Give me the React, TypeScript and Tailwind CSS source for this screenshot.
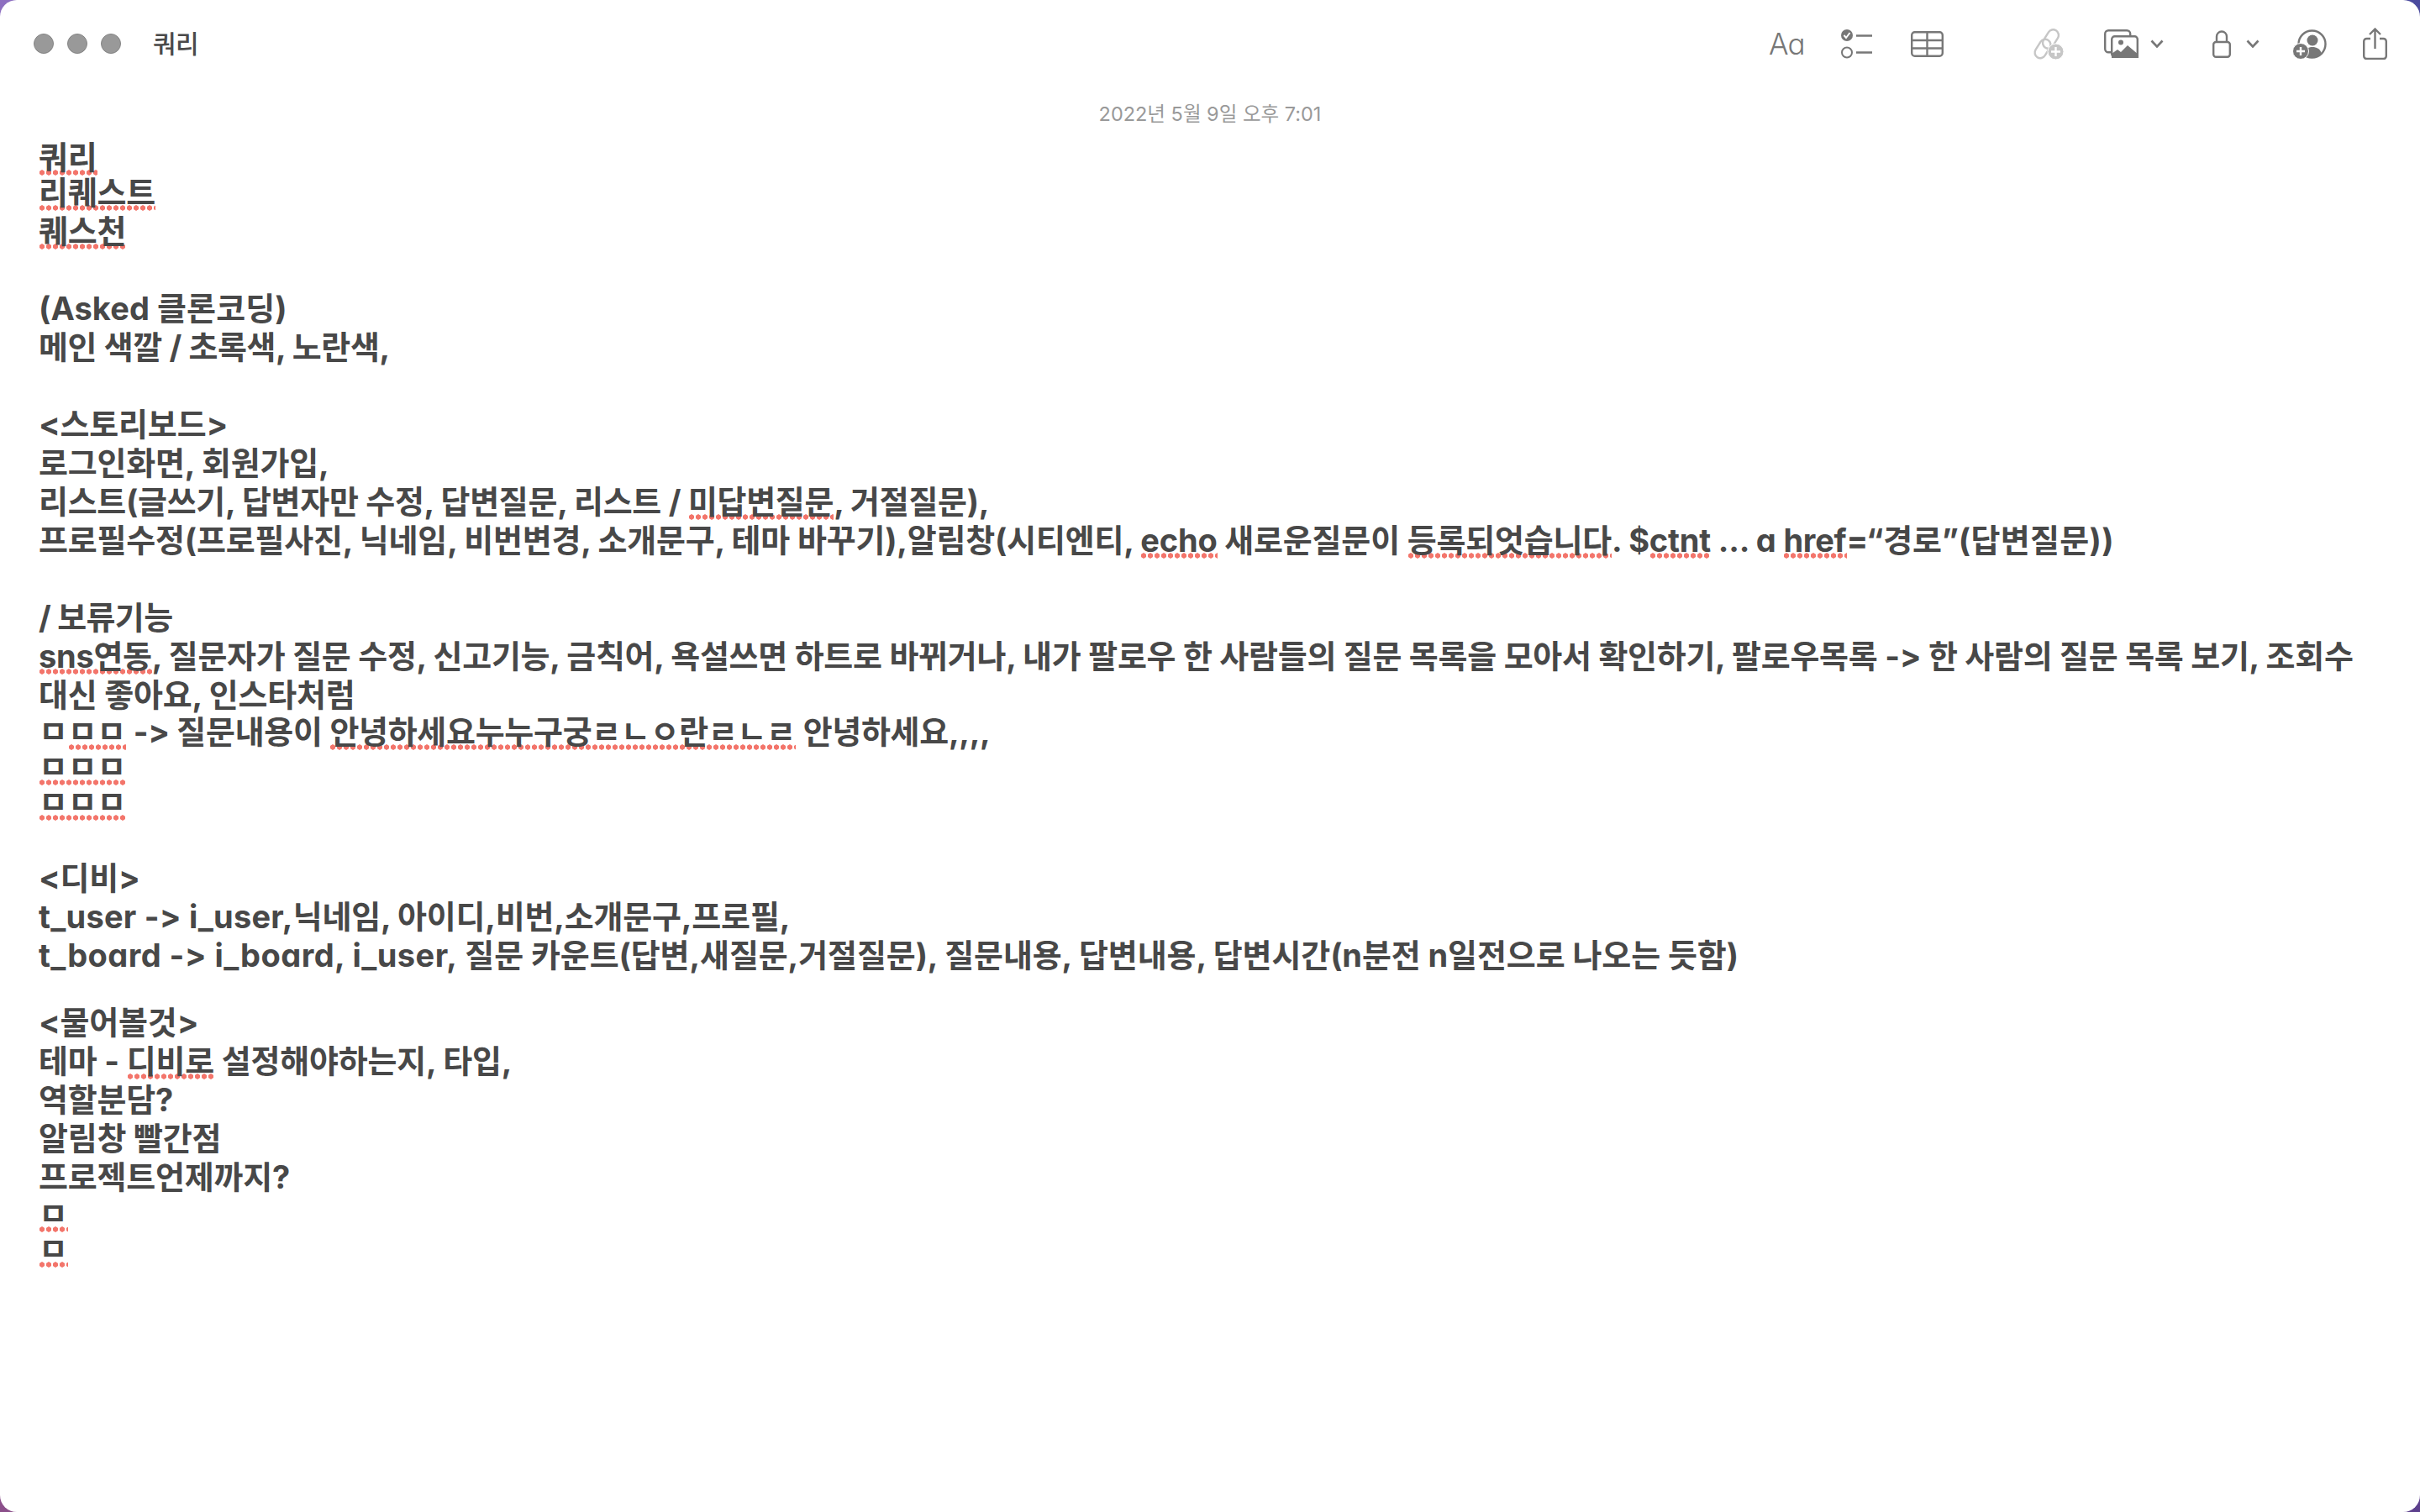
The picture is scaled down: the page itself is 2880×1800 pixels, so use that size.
import type { ReactNode } from 'react';

const U = ({ children }: { children: ReactNode }) => (
  <span className="bg-[radial-gradient(circle_at_center,#f3756b_2.9px,transparent_3.4px)] bg-[length:8px_7px] bg-[position:0_37.5px] bg-repeat-x">
    {children}
  </span>
);

// the note's line pitch isn't even, some lines are a bit shorter
const Line = ({ children, cls = 'h-[46px]' }: { children?: ReactNode; cls?: string }) => (
  <div className={`${cls} leading-[46px] whitespace-nowrap`}>{children}</div>
);

const Checklist = () => (
  <svg width="37" height="35" viewBox="0 0 37 35" className="ml-[44px]" fill="none">
    <circle cx="7" cy="7" r="7" fill="#777" />
    <path d="M3.5 7l2.5 3 4.5-6" stroke="#fff" strokeWidth="2" />
    <circle cx="7" cy="27.5" r="6" stroke="#777" strokeWidth="2" />
    <path d="M18 7.5h19M18 27.5h19" stroke="#777" strokeWidth="2.5" />
  </svg>
);

const TableIcon = () => (
  <svg width="39" height="31" viewBox="0 0 39 31" className="ml-[46px]" fill="none" stroke="#777" strokeWidth="2.4">
    <rect x="1.2" y="1.2" width="36.6" height="28.6" rx="3.5" />
    <path d="M1.2 11h36.6M1.2 20.5h36.6M19.5 1.2v28.6" />
  </svg>
);

const LinkAdd = () => (
  <svg width="38" height="37" viewBox="0 0 38 37" className="ml-[105px]" fill="none">
    <g stroke="#c6c6c6" strokeWidth="2.4">
      <rect x="-6.5" y="-12" width="13" height="24" rx="6.5" transform="translate(22.5 12.5) rotate(32)" />
      <rect x="-6.5" y="-12" width="13" height="24" rx="6.5" transform="translate(13 24) rotate(32)" />
    </g>
    <circle cx="28.5" cy="27.5" r="9.5" fill="#c6c6c6" stroke="#fff" strokeWidth="1" />
    <path d="M28.5 22v11M23 27.5h11" stroke="#fff" strokeWidth="2.4" />
  </svg>
);

const Photos = () => (
  <svg width="41" height="34" viewBox="0 0 41 34" className="ml-[48px]" fill="none">
    <rect x="1.2" y="1.2" width="30" height="26" rx="4" stroke="#777" strokeWidth="2.4" />
    <rect x="8" y="7" width="33" height="27" rx="4" fill="#fff" />
    <rect x="9.2" y="8.2" width="30.6" height="24.6" rx="3.5" stroke="#777" strokeWidth="2.4" />
    <circle cx="20" cy="15.5" r="3" fill="#777" />
    <path d="M9 34v-5l7-5 4 3 8-8 13 11v4z" fill="#777" />
  </svg>
);

const Chevron = ({ cls }: { cls: string }) => (
  <svg width="16" height="10" viewBox="0 0 16 10" className={cls} fill="none">
    <path d="M1.5 1.5L8 8.5l6.5-7" stroke="#777" strokeWidth="2.6" />
  </svg>
);

const Lock = () => (
  <svg width="22" height="33" viewBox="0 0 22 33" className="ml-[58px]" fill="none" stroke="#777" strokeWidth="2.4">
    <rect x="1.2" y="14" width="19.6" height="17.8" rx="3" />
    <path d="M5 14V7.5a6 6 0 0 1 12 0V14" />
  </svg>
);

const PersonAdd = () => (
  <svg width="40" height="35" viewBox="0 0 40 35" className="ml-[40px]" fill="none">
    <circle cx="22.5" cy="17.5" r="16" stroke="#777" strokeWidth="2.4" />
    <circle cx="23" cy="13" r="6.5" fill="#777" />
    <path d="M13 30c1-7 5-9 10-9s9 2 10.5 7c-3 4-7 6-11 6s-7-1-9.5-4z" fill="#777" />
    <circle cx="9" cy="26" r="9.5" fill="#777" stroke="#fff" strokeWidth="1" />
    <path d="M9 21v10M4 26h10" stroke="#fff" strokeWidth="2.4" />
  </svg>
);

const Share = () => (
  <svg width="29" height="38" viewBox="0 0 29 38" className="ml-[43px]" fill="none" stroke="#777" strokeWidth="2.4">
    <path d="M9 13H4.5a3.3 3.3 0 0 0-3.3 3.3v17.4a3.3 3.3 0 0 0 3.3 3.3h20a3.3 3.3 0 0 0 3.3-3.3V16.300a3.3 3.3 0 0 0-3.3-3.3H20" />
    <path d="M14.5 25V2M8 8l6.5-6.5L21 8" />
  </svg>
);

export default function App() {
  return (
    <div className="h-screen bg-[conic-gradient(#4a4a9e_0_25%,#5c3f8c_25%_50%,#8b4f8a_50%_75%,#8d6fc0_75%_100%)]">
      <div className="h-full rounded-[20px] bg-white font-['Inter','Noto_Sans_CJK_KR',sans-serif]">
        {/* title bar */}
        <div className="flex h-[104px] items-center pl-[40px] pr-[39px]">
          <div className="flex gap-[16px]">
            <div className="h-[24px] w-[24px] rounded-full border border-[#858585] bg-[#999]" />
            <div className="h-[24px] w-[24px] rounded-full border border-[#858585] bg-[#999]" />
            <div className="h-[24px] w-[24px] rounded-full border border-[#858585] bg-[#999]" />
          </div>
          <div className="ml-[38px] text-[30px] font-medium tracking-[-0.5px] text-[#4a4a4a]">쿼리</div>
          <div className="ml-auto flex items-center">
            <div className="w-[42px] text-[35px] font-light leading-none tracking-[-1px] text-[#777] [font-feature-settings:'cv11']">Aa</div>
            <Checklist />
            <TableIcon />
            <LinkAdd />
            <Photos />
            <Chevron cls="ml-[14px]" />
            <Lock />
            <Chevron cls="ml-[18px]" />
            <PersonAdd />
            <Share />
          </div>
        </div>

        <div className="h-[60px] pt-[16px] text-center text-[23.5px] leading-[32px] text-[#999]">2022년 5월 9일 오후 7:01</div>

        {/* note body */}
        <div className="pl-[46px] text-[38px] font-bold tracking-[-0.2px] text-[#484848] [font-feature-settings:'cv11']">
          <Line cls="h-[42px]"><U>쿼리</U></Line>
          <Line><U>리퀘스트</U></Line>
          <Line><U>퀘스천</U></Line>
          <Line />
          <Line cls="h-[46px] tracking-[0.1px]">(Asked 클론코딩)</Line>
          <Line cls="h-[46px] tracking-[-0.4px]">메인 색깔 / 초록색, 노란색,</Line>
          <Line />
          <Line>&lt;스토리보드&gt;</Line>
          <Line>로그인화면, 회원가입,</Line>
          <Line cls="h-[46px] tracking-[-0.3px]">리스트(글쓰기, 답변자만 수정, 답변질문, 리스트 / <U>미답변질문</U>, 거절질문),</Line>
          <Line>
            프로필수정(프로필사진, 닉네임, 비번변경, 소개문구, 테마 바꾸기),알림창(시티엔티, <U>echo</U> 새로운질문이 <U>등록되엇습니다</U>. $<U>ctnt</U> ... a <U>href</U>=“경로”<span className="tracking-[0.3px]">(답변질문))</span>
          </Line>
          <Line />
          <Line cls="h-[46px] tracking-[-0.7px]">/ 보류기능</Line>
          <Line cls="h-[46px] tracking-[-0.28px]">
            <U>sns연동</U>, 질문자가 질문 수정, 신고기능, 금칙어, 욕설쓰면 하트로 바뀌거나, 내가 팔로우 한 사람들의 질문 목록을 모아서 확인하기, 팔로우목록 -&gt; 한 사람의 질문 목록 보기, 조회수
          </Line>
          <Line cls="h-[44px]">대신 좋아요, 인스타처럼</Line>
          <Line cls="h-[42px] tracking-[-0.3px]">ㅁ<U>ㅁㅁ</U> -&gt; 질문내용이 <U>안녕하세요누누구궁ㄹㄴㅇ란ㄹㄴㄹ</U> 안녕하세요,,,,</Line>
          <Line cls="h-[42px]"><U>ㅁㅁㅁ</U></Line>
          <Line cls="h-[44px]"><U>ㅁㅁㅁ</U></Line>
          <Line />
          <Line>&lt;디비&gt;</Line>
          <Line><span className="tracking-[0.25px]">t_user -&gt; i_user,</span>닉네임, 아이디,비번,소개문구,프로필,</Line>
          <Line cls="h-[46px] tracking-[-0.1px]"><span className="tracking-[0.45px]">t_board -&gt; i_board, i_user,</span> 질문 카운트(답변,새질문,거절질문), 질문내용, 답변내용, 답변시간(n분전 n일전으로 나오는 듯함)</Line>
          <div className="h-[34px]" />
          <Line>&lt;물어볼것&gt;</Line>
          <Line>테마 - <U>디비로</U> 설정해야하는지, 타입,</Line>
          <Line>역할분담?</Line>
          <Line>알림창 빨간점</Line>
          <Line cls="h-[44px]">프로젝트언제까지?</Line>
          <Line cls="h-[42px]"><U>ㅁ</U></Line>
          <Line cls="h-[42px]"><U>ㅁ</U></Line>
        </div>
      </div>
    </div>
  );
}
